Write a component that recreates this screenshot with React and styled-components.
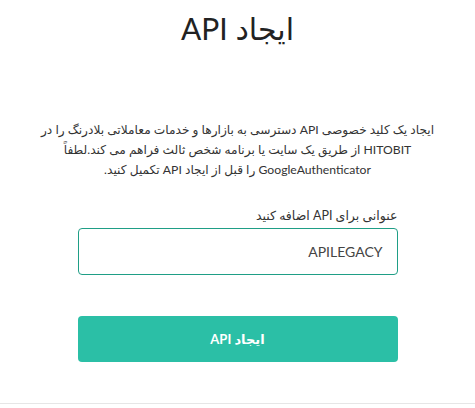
import React, { useState } from 'react';
import styled, { createGlobalStyle } from 'styled-components';

const GlobalStyle = createGlobalStyle`
  html, body {
    margin: 0;
    padding: 0;
    background: #ffffff;
  }
  body {
    font-family: Lato, "DejaVu Sans", sans-serif;
    color: #333333;
  }
`;

const Page = styled.div`
  direction: rtl;
  width: 475px;
  height: 404px;
  box-sizing: border-box;
  border-bottom: 1px solid #e6e6e6;
  display: flex;
  flex-direction: column;
  align-items: center;
`;

const Title = styled.h1`
  margin: 8px 0 0;
  font-size: 30px;
  font-weight: 400;
  line-height: 40px;
  color: #222222;
`;

const Description = styled.div`
  margin-top: 72px;
  display: flex;
  flex-direction: column;
  align-items: center;
`;

const Line = styled.span`
  display: block;
  height: 20px;
  font-size: 12.2px;
  line-height: 20px;
  white-space: nowrap;
  color: #333333;
`;

const Field = styled.div`
  margin-top: 27px;
  width: 320px;
  display: flex;
  flex-direction: column;
  gap: 3px;
`;

const Label = styled.label`
  font-size: 12.5px;
  line-height: 18px;
  color: #333333;
`;

const Input = styled.input`
  box-sizing: border-box;
  width: 100%;
  height: 47px;
  padding: 0 14px;
  border: 1px solid #1f9e86;
  border-radius: 4px;
  font-family: Lato, "DejaVu Sans", sans-serif;
  font-size: 14px;
  color: #444444;
  direction: rtl;
  outline: none;
`;

const Submit = styled.button`
  margin-top: 41px;
  width: 320px;
  height: 46px;
  border: none;
  border-radius: 4px;
  background: #2bbfa6;
  color: #ffffff;
  font-family: Lato, "DejaVu Sans", sans-serif;
  font-size: 13px;
  font-weight: 700;
  cursor: pointer;
`;

const lines = [
  'ایجاد یک کلید خصوصی API دسترسی به بازارها و خدمات معاملاتی بلادرنگ را در',
  'HITOBIT از طریق یک سایت یا برنامه شخص ثالث فراهم می کند.لطفاً',
  'GoogleAuthenticator را قبل از ایجاد API تکمیل کنید.',
];

export default function App() {
  const [name, setName] = useState('APILEGACY');

  return (
    <>
      <GlobalStyle />
      <Page>
        <Title>ایجاد API</Title>
        <Description>
          {lines.map((text) => (
            <Line key={text}>{text}</Line>
          ))}
        </Description>
        <Field>
          <Label>عنوانی برای API اضافه کنید</Label>
          <Input value={name} onChange={(e) => setName(e.target.value)} />
        </Field>
        <Submit>ایجاد API</Submit>
      </Page>
    </>
  );
}
